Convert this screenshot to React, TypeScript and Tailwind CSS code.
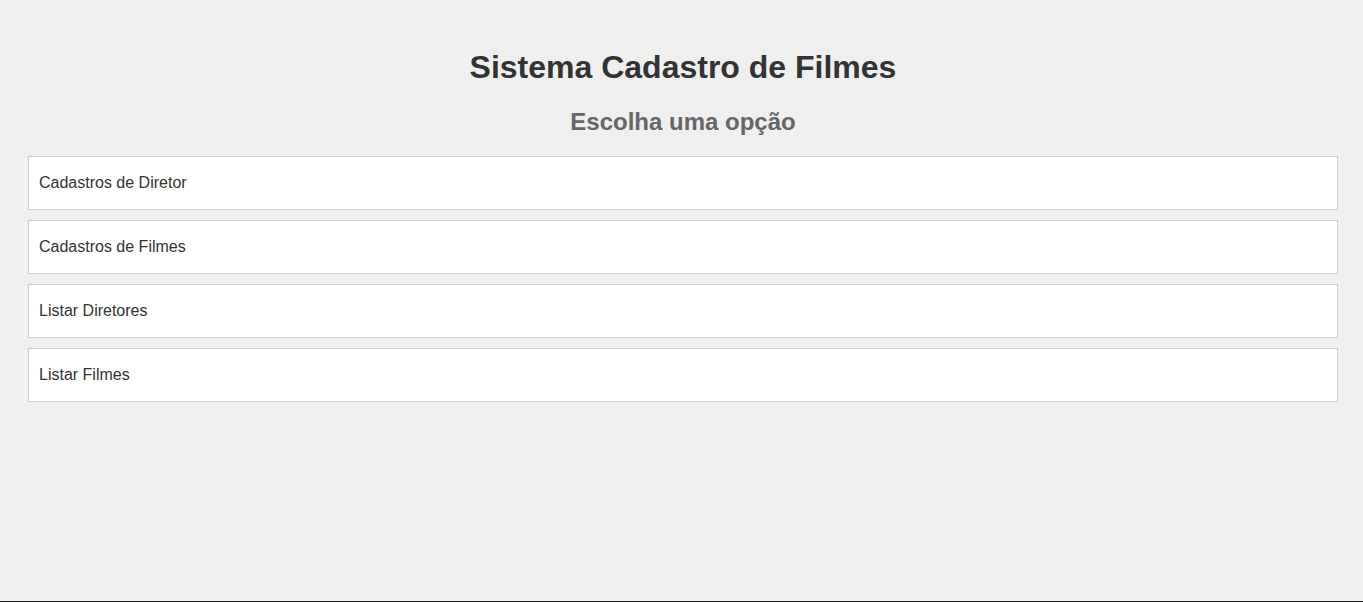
const options = [
  'Cadastros de Diretor',
  'Cadastros de Filmes',
  'Listar Diretores',
  'Listar Filmes',
];

export default function App() {
  return (
    <div className="flex min-h-[602px] flex-col bg-[#efefef] font-['Liberation_Sans',Arial,sans-serif] text-[#333]">
      <main className="flex-1 pt-[49px] pl-[28px] pr-[25px]">
        <h1 className="text-center text-[32px] leading-[37px] font-bold text-[#333]">
          Sistema Cadastro de Filmes
        </h1>
        <h2 className="mt-[22px] text-center text-[24px] leading-[28px] font-bold text-[#666]">
          Escolha uma opção
        </h2>
        <ul className="mt-[20px] flex flex-col gap-[10px]">
          {options.map((opt) => (
            <li
              key={opt}
              className="flex h-[54px] cursor-pointer items-center border border-[#ccc] bg-white px-[10px] text-[16px] text-[#333]"
            >
              {opt}
            </li>
          ))}
        </ul>
      </main>
      <div className="h-px bg-[#222]" />
    </div>
  );
}
